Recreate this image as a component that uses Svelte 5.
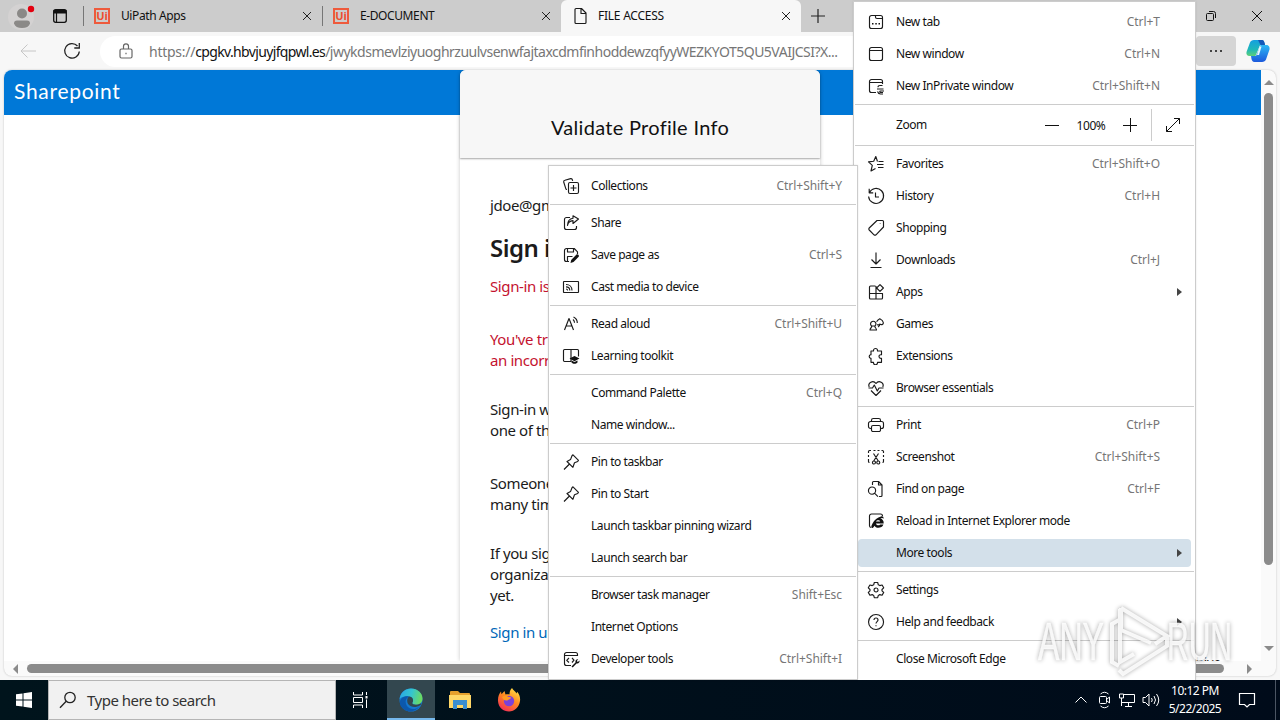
<script>
    const tabs = [
        { title: "UiPath Apps", icon: "ui" },
        { title: "E-DOCUMENT", icon: "ui" },
        { title: "FILE ACCESS", icon: "file", active: true },
    ]

    const mainMenu = [
        { label: "New tab", keys: "Ctrl+T", icon: "newtab" },
        { label: "New window", keys: "Ctrl+N", icon: "window" },
        { label: "New InPrivate window", keys: "Ctrl+Shift+N", icon: "inprivate" },
        { sep: true },
        { zoom: true },
        { sep: true },
        { label: "Favorites", keys: "Ctrl+Shift+O", icon: "favorites" },
        { label: "History", keys: "Ctrl+H", icon: "history" },
        { label: "Shopping", icon: "tag" },
        { label: "Downloads", keys: "Ctrl+J", icon: "download" },
        { label: "Apps", icon: "apps", more: true },
        { label: "Games", icon: "games" },
        { label: "Extensions", icon: "puzzle" },
        { label: "Browser essentials", icon: "heart" },
        { sep: true },
        { label: "Print", keys: "Ctrl+P", icon: "print" },
        { label: "Screenshot", keys: "Ctrl+Shift+S", icon: "screenshot" },
        { label: "Find on page", keys: "Ctrl+F", icon: "find" },
        { label: "Reload in Internet Explorer mode", icon: "ie" },
        { label: "More tools", more: true, open: true },
        { sep: true },
        { label: "Settings", icon: "gear" },
        { label: "Help and feedback", icon: "help", more: true },
        { sep: true },
        { label: "Close Microsoft Edge" },
    ]

    const toolsMenu = [
        { label: "Collections", keys: "Ctrl+Shift+Y", icon: "collections" },
        { sep: true },
        { label: "Share", icon: "share" },
        { label: "Save page as", keys: "Ctrl+S", icon: "save" },
        { label: "Cast media to device", icon: "cast" },
        { sep: true },
        { label: "Read aloud", keys: "Ctrl+Shift+U", icon: "read" },
        { label: "Learning toolkit", icon: "learning" },
        { sep: true },
        { label: "Command Palette", keys: "Ctrl+Q" },
        { label: "Name window..." },
        { sep: true },
        { label: "Pin to taskbar", icon: "pin" },
        { label: "Pin to Start", icon: "pin" },
        { label: "Launch taskbar pinning wizard" },
        { label: "Launch search bar" },
        { sep: true },
        { label: "Browser task manager", keys: "Shift+Esc" },
        { label: "Internet Options" },
        { label: "Developer tools", keys: "Ctrl+Shift+I", icon: "devtools" },
    ]

    // stroked outlines on an 18px grid
    const strokes = {
        newtab: "M4.5 2.5h9a2 2 0 0 1 2 2v9a2 2 0 0 1-2 2h-9a2 2 0 0 1-2-2v-9a2 2 0 0 1 2-2zM8.5 2.5v1.5a1.5 1.5 0 0 0 1.500 1.500h5.500",
        window: "M4.500 2.500h9a2 2 0 0 1 2 2v9a2 2 0 0 1-2 2h-9a2 2 0 0 1-2-2v-9a2 2 0 0 1 2-2zM2.500 5.500h13",
        inprivate: "M9 15.500H4.500a2 2 0 0 1-2-2v-9a2 2 0 0 1 2-2h9a2 2 0 0 1 2 2V7M2.500 5.500h13M15.500 8.500h-2.500c-1.200 0-2 .8-2 1.800M10 12h6.500M17 14h-3.500c-1 0-1 1.500 0 1.500H16M10.500 14.500c.5 1.500 1.500 2.500 3 2.500h2.500",
        favorites: "M10.500 6.500L8.800 1.500 6.700 6.300 1.500 6.900l3.800 3.500-1.300 5.600 4.500-2.500M11.500 6.500h5M10 9.500h6.500M11 12.500h5.500",
        history: "M2.200 1.800v4h4M2.400 5.500a7.500 7.500 0 1 1-.8 4M8.500 5.500v4.500h3.500",
        tag: "M10 1.500h5.500a1 1 0 0 1 1 1V8L9 15.800a1.500 1.500 0 0 1-2 0L2.200 11a1.500 1.500 0 0 1 0-2zM13.200 4.600v.4",
        download: "M9 1.500v11.500M4.500 8.500L9 13l4.500-4.500M3.500 16.500h11",
        apps: "M8.500 3h-5a1 1 0 0 0-1 1v11a1 1 0 0 0 1 1h11a1 1 0 0 0 1-1v-4.500h-13M9 3v13M9 10.500h6.500M13 1.600l3.400 3.400L13 8.400 9.600 5z",
        games: "M3 15h6.500c0-2-1.700-2-1.700-4h-3c0 2-1.800 2-1.800 4zM4.500 11a2.700 2.700 0 1 1 3.500 0M10 9.800c2 .3 2.600-.4 2.800-.8 2 1.600 3.800 0 3.500-1.500-.2-1.400-2-2.900-3.500-3.700-1.300.7-2.500 1.700-3.200 3M12.800 9c0 1.500-.5 2.500-1.800 3",
        puzzle: "M6.500 4V3.500a2 2 0 0 1 4 0V4h4v3.700h-.7a1.700 1.700 0 0 0 0 3.600h.7v4h-4v.5a2 2 0 0 1-4 0v-.5H4v-4h-.5a1.900 1.900 0 0 1 0-3.600H4V4z",
        heart: "M2.200 8C.5 4 6 .5 9 4.500c3-4 8.500-.5 6.800 3.500M1.500 9h4l1.800-3 3 6 1.700-3h4.500M4 11.500l5 5 5-5",
        print: "M4.500 5.500V4.300a1.800 1.800 0 0 1 1.800-1.800h5.400a1.800 1.800 0 0 1 1.800 1.800v1.200M4.500 12.500h-1a2 2 0 0 1-2-2v-3a2 2 0 0 1 2-2h11a2 2 0 0 1 2 2v3a2 2 0 0 1-2 2h-1M6 9.500h6a1.500 1.500 0 0 1 1.500 1.500v3a1.500 1.500 0 0 1-1.500 1.500H6A1.500 1.500 0 0 1 4.500 14v-3A1.500 1.500 0 0 1 6 9.500z",
        screenshot: "M1.500 5V3.500a1 1 0 0 1 1-1H4M6.500 2.500h2M10.500 2.500h2M14.500 2.500h1a1 1 0 0 1 1 1V5M16.500 7v2M16.500 11v2.500a1 1 0 0 1-1 1M1.500 7v2M1.500 11v2.500a1 1 0 0 0 1 1M6.500 5.500l4.800 7.500M11.500 5.500L6.700 13M7 13a1.500 1.500 0 1 0-.1 3A1.500 1.500 0 0 0 7 13zM11.200 13a1.500 1.500 0 1 0 .1 3 1.500 1.500 0 0 0-.1-3z",
        find: "M5.500 5V2.500a1 1 0 0 1 1-1h5l3.500 3.500v10.500a1 1 0 0 1-1 1h-2M11.500 1.500V5H15M5 7a3.600 3.600 0 1 0 .1 7.200A3.600 3.600 0 0 0 5 7zM7.500 13.200l3.500 3.500",
        ie: "M4 15.500a1.700 1.700 0 0 1-1.500-1.700V4a2 2 0 0 1 2-2h9a2 2 0 0 1 2 2",
        gear: "M7.300 1.500h3.400l.6 2.300 1.500.8 2.300-.6 1.600 2.800L15 8.500v1.300l1.700 1.600-1.600 2.800-2.300-.6-1.500.8-.6 2.300H7.300l-.6-2.300-1.500-.8-2.300.6-1.600-2.800L3 9.800V8.500L1.300 6.800 2.900 4l2.300.6 1.500-.8zM9 7a2 2 0 1 0 .1 4A2 2 0 0 0 9 7z",
        help: "M9 1.500a7.500 7.500 0 1 0 .1 15A7.500 7.500 0 0 0 9 1.500zM7 7c0-2.700 4-2.700 4 0 0 1.500-2 1.700-2 3.500M9 12.300v.9",
        collections: "M5 12.500h-.2a1 1 0 0 1-1-.8L1.700 5a1.500 1.500 0 0 1 1.200-1.700L8.700 1.600a1.500 1.500 0 0 1 1.700 1.200l.2 1M8 5.500h7a1.500 1.500 0 0 1 1.500 1.500v8A1.500 1.500 0 0 1 15 16.500H8A1.500 1.500 0 0 1 6.500 15V7A1.500 1.500 0 0 1 8 5.500zM11.500 8v6M8.500 11h6",
        share: "M8 3.500H4.500a2 2 0 0 0-2 2v8a2 2 0 0 0 2 2h8a2 2 0 0 0 2-2V12M5.500 11.500c.5-3 2.500-4.700 5.500-4.900V9.500l5.500-4.500L11 1.800v2.400c-3.500.5-5.500 3-5.500 7.300z",
        save: "M7 15.500H4.500a2 2 0 0 1-2-2v-9a2 2 0 0 1 2-2h7.700l3.300 3.300V8M5.500 2.500v3.500h6v-3.500M5.500 15.500V10.500h5",
        cast: "M2 3.500h14a.5.500 0 0 1 .5.500v10a.5.500 0 0 1-.5.500H2a.5.500 0 0 1-.5-.5V4a.5.500 0 0 1 .5-.5zM4 8.800c2.300 0 3.800 1.500 3.800 3.800M4 6.500c3.500 0 6 2.500 6 6M4 11c1 0 1.600.6 1.600 1.600",
        read: "M2.500 15L7 3.500 11.500 15M4 11h6M11 4.500a4 4 0 0 1 1.500 3.300M11.500 2a6.500 6.500 0 0 1 3.800 6",
        learning: "M9 14.500H2.500a1 1 0 0 1-1-1v-10a1 1 0 0 1 1-1H9zM9 2.500h6.500a1 1 0 0 1 1 1v6",
        pin: "M11 1.800l5.500 5.500-.8 1.200-3.200 1.300-1.600 4.500L5 8.500l3.500-1.900L10 2.700zM7.500 11L2 16.500",
        devtools: "M9 15.500H4.500a2 2 0 0 1-2-2v-9a2 2 0 0 1 2-2h9a2 2 0 0 1 2 2V6M2.500 5.500h13M7 8l-2.300 2.300L7 12.500M10 8l2 2.200L10 12.500",
        file: "M5 1.500h5.500L15 6v9.500a1 1 0 0 1-1 1H5a1 1 0 0 1-1-1v-13a1 1 0 0 1 1-1zM10 1.500V6.500h5",
    }

    // solid parts drawn over the outlines
    const fills = {
        newtab: "M5 10h1.500v1.500H5zM8.300 10h1.500v1.500H8.300zM11.500 10h1.500v1.500h-1.500z",
        save: "M8.500 17l.7-3L14.500 8.500c1-1 3.200 1 2.200 2.200L11.500 16z",
        learning: "M12.500 9l5 2.500-5 2.700-5-2.700zM9.500 13.500l3 1.600 3-1.600v2c-1.500 1.700-4.500 1.700-6 0z",
        devtools: "M9.500 16.500l4-4c-.6-2 1-3.700 2.700-3.200l-1.400 1.700 1 1 1.700-1.400c.5 2-1.200 3.300-3 2.800l-3.800 4z",
        ie: "M16.700 11.500H8.900c.3 2 3.300 2.500 4.200.9h3.300c-1 4-7.800 4.300-8.900 1.300C5.800 17.300 2.500 17 5.500 11.500 7.300 8 10.500 5.500 14 4.500c2-.6 3 .4 2.300 2.500-.3-1.300-1.500-1.400-3.100-.4 2.400.5 3.600 2.300 3.500 4.900zM9 9.600h4.200C12.900 7.700 9.500 7.700 9 9.600z",
    }
</script>

{#snippet glyph(name)}
    <svg class="glyph" viewBox="0 0 18 18">
        {#if strokes[name]}<path d={strokes[name]} />{/if}
        {#if fills[name]}<path class="solid" d={fills[name]} />{/if}
    </svg>
{/snippet}

{#snippet menuRows(items)}
    {#each items as item}
        {#if item.sep}
            <div class="sep"></div>
        {:else if item.zoom}
            <div class="row zoom">
                <span class="label">Zoom</span>
                <svg class="zoom-btn" viewBox="0 0 16 16"><path d="M1 8.500h14" /></svg>
                <span class="percent">100%</span>
                <svg class="zoom-btn" viewBox="0 0 16 16"><path d="M1 8.500h14M8.500 1v14" /></svg>
                <span class="full">
                    <svg class="zoom-btn" viewBox="0 0 16 16">
                        <path d="M1.500 14.500l13-13M9 1.500h5.500V7M1.500 9v5.500H7" />
                    </svg>
                </span>
            </div>
        {:else}
            <div class="row" class:open={item.open}>
                <span class="icon">
                    {#if item.icon}{@render glyph(item.icon)}{/if}
                </span>
                <span class="label">{item.label}</span>
                {#if item.keys}<span class="keys">{item.keys}</span>{/if}
                {#if item.more}<span class="arrow"></span>{/if}
            </div>
        {/if}
    {/each}
{/snippet}

<div class="screen">
    <div class="tabstrip">
        <div class="profile">
            <svg width="28" height="28" viewBox="0 0 28 28">
                <circle cx="13" cy="14" r="13" fill="#d4d2d2" />
                <circle cx="14" cy="10.500" r="5" fill="#8b8987" />
                <path d="M6 20.500q0-3 3-3h10q3 0 3 3-1.500 4.500-8 4.500t-8-4.500z" fill="#8b8987" />
                <circle cx="23" cy="6" r="3.200" fill="#e3000f" />
            </svg>
        </div>
        <svg class="workspaces" width="16" height="16" viewBox="0 0 16 16">
            <rect x="1.700" y="1.700" width="12.600" height="12.600" rx="2" fill="none" stroke="#111" stroke-width="1.300" />
            <path d="M1.500 2h13v3.500h-13z" fill="#111" />
            <path d="M4.500 4v10" stroke="#111" stroke-width="1.200" />
        </svg>
        {#each tabs as tab}
            <div class="tab" class:active={tab.active}>
                {#if tab.icon === "ui"}
                    <span class="uipath">Ui</span>
                {:else}
                    {@render glyph("file")}
                {/if}
                <span class="title">{tab.title}</span>
                <svg class="close" viewBox="0 0 10 10"><path d="M1 1l8 8M9 1L1 9" /></svg>
            </div>
        {/each}
        <svg class="add" viewBox="0 0 16 16"><path d="M1 8h14M8 1v14" /></svg>
        <div class="controls">
            <svg width="12" height="12" viewBox="0 0 12 12">
                <path d="M2.500 3.500h5a1 1 0 0 1 1 1v5a1 1 0 0 1-1 1h-5a1 1 0 0 1-1-1v-5a1 1 0 0 1 1-1zM4 1.500h4.500a2 2 0 0 1 2 2V8" />
            </svg>
            <svg width="12" height="12" viewBox="0 0 12 12"><path d="M1 1l10 10M11 1L1 11" /></svg>
        </div>
    </div>

    <div class="toolbar">
        <svg class="back" viewBox="0 0 18 18"><path d="M17 9H2M8.500 2.500L2 9l6.500 6.500" /></svg>
        <svg class="reload" viewBox="0 0 18 18"><path d="M16.300 9.500A7.300 7.300 0 1 1 14.500 4M16.300 1v5h-5" /></svg>
        <div class="address">
            <svg class="lock" viewBox="0 0 18 18">
                <path d="M4.500 7h9a1.500 1.500 0 0 1 1.500 1.500v6a1.500 1.500 0 0 1-1.500 1.500h-9A1.500 1.500 0 0 1 3 14.500v-6A1.500 1.500 0 0 1 4.500 7zM6.500 7V4.300a2.500 2.500 0 0 1 5 0V7M9 10.800v1.400" />
            </svg>
            <span class="url"><span class="scheme">https://</span><b>cpgkv.hbvjuyjfqpwl.es</b><span class="path">/jwykdsmevlziyuoghrzuulvsenwfajtaxcdmfinhoddewzqfyyWEZKYOT5QU5VAIJCSI?X...</span></span>
        </div>
        <div class="dots"><i></i><i></i><i></i></div>
        <svg class="copilot" viewBox="0 0 24 24">
            <defs>
                <linearGradient id="cpA" x1="0" y1="0" x2="0" y2="1">
                    <stop offset="0" stop-color="#159fe0" />
                    <stop offset=".6" stop-color="#1fb7b8" />
                    <stop offset="1" stop-color="#5ed078" />
                </linearGradient>
                <linearGradient id="cpB" x1="0" y1="0" x2="0" y2="1">
                    <stop offset="0" stop-color="#2bb8f5" />
                    <stop offset="1" stop-color="#1c59dc" />
                </linearGradient>
            </defs>
            <path d="M8 1h7.500c2 0 2.600 1.500 3 3l.6 2h-5L9.500 17H3.500C1 17 0 15 .5 13L4 3.500C4.600 2 6 1 8 1z" fill="url(#cpA)" />
            <path d="M12 1h4c2 0 2.500 2 3 5h-4.500z" fill="#1458b8" />
            <path d="M16 23H8.500c-2 0-2.600-1.500-3-3L5 17h5L14.500 6h6C23 6 24 8.500 23.500 10.500L20 20.500c-.6 1.500-2 2.500-4 2.500z" fill="url(#cpB)" />
            <path d="M11 16l2.500-8.500h2L13 16z" fill="#e9f6fd" />
        </svg>
    </div>

    <div class="frame">
        <div class="page">
            <header>Sharepoint</header>
            <div class="card">
                <div class="card-head">Validate Profile Info</div>
                <div class="card-body">
                    <p class="mail">jdoe@gm</p>
                    <h1>Sign in</h1>
                    <p class="error first">Sign-in is</p>
                    <p class="error">You've tried<br />an incorrect</p>
                    <p class="reason">Sign-in with<br />one of the</p>
                    <p class="someone">Someone<br />many times</p>
                    <p class="org">If you sign<br />organization<br />yet.</p>
                    <p class="link">Sign in up</p>
                </div>
            </div>
            <div class="footer">Archive</div>
        </div>
        <div class="vbar"><span class="up"></span><span class="thumb"></span><span class="down"></span></div>
        <div class="hbar"><span class="left"></span><span class="thumb"></span><span class="right"></span></div>
    </div>

    <div class="taskbar">
        <div class="start">
            <svg width="16" height="16" viewBox="0 0 16 16">
                <path d="M0 2.300L6.500 1.400V7.500H0zM7.500 1.200L16 0v7.500H7.500zM0 8.500h6.500v6.100L0 13.700zM7.500 8.500H16V16l-8.500-1.200z" fill="#fff" />
            </svg>
        </div>
        <div class="search">
            <svg width="18" height="18" viewBox="0 0 18 18">
                <circle cx="11" cy="6.500" r="5.200" />
                <path d="M7.200 10.300L1 16.800" />
            </svg>
            <span>Type here to search</span>
        </div>
        <div class="task">
            <svg width="18" height="18" viewBox="0 0 18 18" fill="none" stroke="#fff">
                <path d="M1.500 1v3h9V1M1.500 17v-3h9v3M1.500 6.500h9v5h-9zM14.500 1v3M14.500 8.500V17" />
                <path d="M13.500 5h2v2.500h-2z" fill="#fff" stroke="none" />
            </svg>
        </div>
        <div class="task current">
            <svg width="24" height="24" viewBox="0 0 24 24">
                <defs>
                    <linearGradient id="edTop" x1="0" y1=".3" x2="1" y2=".5">
                        <stop offset="0" stop-color="#2aa7e4" />
                        <stop offset=".5" stop-color="#35c5cf" />
                        <stop offset="1" stop-color="#6fdc5a" />
                    </linearGradient>
                </defs>
                <circle cx="12" cy="12" r="11.500" fill="#1477cf" />
                <path d="M.6 11C1.500 4.500 6.500.5 12 .5c6.500 0 11.500 4.500 11.500 10 0 4-3 6.300-6.500 6.300-2.500 0-4.200-1-3.700-2 1.700-2.300.8-5.800-3.300-6.300C6 8 2 9 .6 11z" fill="url(#edTop)" />
                <path d="M10 8.500c-3.500 1.500-4.500 6-2 9.500 2.700 3.800 8.500 4.300 12.500.2-4.500 7-14.500 6.700-18.500.3-3.500-6 1.500-11 8-10z" fill="#0c58ac" />
                <path d="M13.300 14.800c1.700-2.300.8-5.800-3.300-6.300-2 1.500-2.500 5.500-.5 8 2.500 3 7.500 3.500 12 .5 1.500-1.500.8-2-.5-1.200-3 1.600-8.200 1-7.700-1z" fill="#33474f" />
            </svg>
        </div>
        <div class="task">
            <svg width="22" height="20" viewBox="0 0 22 20">
                <path d="M1 2q0-1 1-1h7l2 2h9q1 0 1 1v5H1z" fill="#e6a02d" />
                <path d="M0 5h22v13H0z" fill="#ffd767" />
                <path d="M4 10h14v9h-4v-4H8v4H4z" fill="#3b8ed0" />
            </svg>
        </div>
        <div class="task">
            <svg width="24" height="24" viewBox="0 0 24 24">
                <defs>
                    <linearGradient id="fx" x1=".8" y1="0" x2=".2" y2="1">
                        <stop offset="0" stop-color="#ffe34a" />
                        <stop offset=".45" stop-color="#ff8a1f" />
                        <stop offset="1" stop-color="#f2285a" />
                    </linearGradient>
                </defs>
                <path d="M15 0c1 2 3.500 3.500 4.500 5.500l.7-1.800C22.500 6.500 23.500 9.500 23 13c-.8 6-5.500 10.500-11 10.500S1.300 19.500 1 13c-.2-4 1-7 3-9.500l.5 2.800L7.500 3l1 3.500c1.500-.5 4 0 4 0C12.500 4 13 1.800 15 0z" fill="url(#fx)" />
                <circle cx="12" cy="13" r="5.200" fill="#7a41d9" />
                <path d="M5 9c2-1.700 4.500-1.500 6.500 0 1.500 0 2.500.3 2.500 1-1 1.500-3 1.200-3.500 2.500C7 13 6 11.500 5 9z" fill="#ff9a22" />
            </svg>
        </div>
        <div class="tray">
            <svg width="14" height="18" viewBox="0 0 14 18"><path d="M1.500 11.500L7 6l5.500 5.500" /></svg>
            <svg class="camera" width="14" height="18" viewBox="0 0 14 18"><path d="M2.500 5.500h5a1 1 0 0 1 1 1v5a1 1 0 0 1-1 1h-5a1 1 0 0 1-1-1v-5a1 1 0 0 1 1-1zM8.500 8.500l3-2.500v6l-3-2.500M2.500 3q4-3.500 8 0M2.500 15q4 3.500 8 0" /></svg>
            <svg width="18" height="18" viewBox="0 0 18 18"><path d="M1.500 3v4h4V3zM3.500 7v8M6 3.500h10.500v8H4M10.500 11.500V15M7 15.500h7" /></svg>
            <svg width="18" height="18" viewBox="0 0 18 18"><path d="M1 6.500h2.500L7 3v12L3.500 11.500H1zM9.500 7q1.500 2 0 4M12 5q3 4 0 8M14.500 3q4.500 6 0 12" /></svg>
        </div>
        <div class="clock"><span>10:12 PM</span><span>5/22/2025</span></div>
        <div class="notify">
            <svg width="18" height="18" viewBox="0 0 18 18"><path d="M1.500 2.500h15v11h-5L9 16l-2.500-2.500h-5z" /></svg>
        </div>
        <div class="peek"></div>
    </div>

    <div class="menu main">{@render menuRows(mainMenu)}</div>
    <div class="menu tools">{@render menuRows(toolsMenu)}</div>

    <svg class="watermark" viewBox="0 0 210 76">
        <g class="letters">
            <text x="9" y="56" textLength="66" lengthAdjust="spacingAndGlyphs">ANY</text>
            <text x="138" y="56" textLength="65" lengthAdjust="spacingAndGlyphs">RUN</text>
        </g>
        <path d="M90 16l-7 4v38l7 4M91 5v53l14-8M92 4l46 28-12 8M92 4v22l30 13M90 66l4 4 44-28v-9" />
    </svg>
</div>

<style>
    :global(body) {
        margin: 0;
        overflow: hidden;
    }
    .screen {
        position: relative;
        display: flex;
        flex-direction: column;
        width: 1280px;
        height: 720px;
        overflow: hidden;
        background: #f7f7f7;
        color: #111;
        font-family: "Noto Sans", "Open Sans", sans-serif;
        font-size: 12px;
    }
    svg {
        flex: none;
    }
    .glyph {
        width: 18px;
        height: 18px;
        fill: none;
        stroke: #1b1b1b;
        stroke-width: 1.150;
        stroke-linejoin: round;
    }
    .glyph .solid {
        fill: #111;
        stroke: none;
    }

    /* tab strip */
    .tabstrip {
        display: flex;
        height: 32px;
        background: #ccc;
        align-items: center;
    }
    .profile {
        display: flex;
        margin: 2px 16px 0 8px;
    }
    .workspaces {
        margin-right: 15px;
    }
    .tab {
        box-sizing: border-box;
        display: flex;
        align-items: center;
        width: 239px;
        height: 32px;
        padding: 0 10px 0 11px;
        background: linear-gradient(#767676, #767676) 0 6px / 1px 20px no-repeat;
    }
    .tab.active {
        width: 240px;
        background: #f7f7f7;
        border-radius: 6px 6px 0 0;
        padding-left: 10px;
    }
    .uipath {
        box-sizing: border-box;
        width: 16px;
        height: 16px;
        border: 2px solid #ee5a3c;
        color: #ee4f30;
        font-size: 11px;
        font-weight: 700;
        line-height: 11px;
        text-align: center;
    }
    .title {
        flex: 1;
        margin-left: 11px;
        margin-top: -1px;
        font-size: 12px;
        letter-spacing: -0.4px;
    }
    .tab.active .title {
        margin-left: 9px;
        letter-spacing: -0.25px;
    }
    .close {
        width: 10px;
        height: 10px;
        stroke: #222;
    }
    .add {
        width: 16px;
        height: 16px;
        margin-left: 9px;
        stroke: #222;
        stroke-width: 1.200;
    }
    .controls {
        display: flex;
        gap: 34px;
        margin-left: auto;
        margin-right: 17px;
        fill: none;
        stroke: #111;
    }

    /* toolbar */
    .toolbar {
        display: flex;
        align-items: center;
        height: 38px;
        background: #f7f7f7;
        fill: none;
    }
    .back {
        width: 18px;
        height: 18px;
        margin-left: 19px;
        stroke: #c6c6c6;
    }
    .reload {
        width: 18px;
        height: 18px;
        margin-left: 26px;
        stroke: #222;
        stroke-width: 1.300;
    }
    .address {
        display: flex;
        align-items: center;
        width: 1096px;
        height: 31px;
        margin-left: 19px;
        padding-left: 17px;
        box-sizing: border-box;
        background: #fff;
        border-radius: 16px;
        overflow: hidden;
    }
    .lock {
        width: 18px;
        height: 18px;
        stroke: #666;
        stroke-width: 1.200;
    }
    .url {
        margin-left: 14px;
        font-size: 14px;
        color: #767676;
        white-space: nowrap;
    }
    .url b {
        font-weight: 400;
        color: #111;
        letter-spacing: -0.65px;
    }
    .scheme {
        letter-spacing: -0.25px;
    }
    .path {
        letter-spacing: -0.5px;
    }
    .dots {
        display: flex;
        align-items: center;
        justify-content: center;
        gap: 3px;
        width: 40px;
        height: 30px;
        border-radius: 4px;
        background: #d5d5d5;
    }
    .dots i {
        width: 2px;
        height: 2px;
        border-radius: 1px;
        background: #111;
    }
    .copilot {
        width: 24px;
        height: 24px;
        margin-left: 10px;
    }

    /* web page */
    .frame {
        display: grid;
        grid-template: 591px 15px / 1257px 15px;
        width: 1272px;
        height: 606px;
        margin: 0 4px 4px;
        background: #fafafa;
        border-radius: 8px;
        overflow: hidden;
        box-shadow: 0 0 2px #bbb;
    }
    .page {
        display: grid;
        grid-template-columns: 456px 360px 1fr;
        grid-template-rows: 45px 546px;
        background: #fff;
        overflow: hidden;
    }
    header {
        grid-area: 1 / 1 / 2 / 4;
        padding-left: 10px;
        background: #0078d7;
        color: #fff;
        font: 21px/41px Lato, sans-serif;
        letter-spacing: 0.7px;
    }
    .card {
        grid-area: 1 / 2 / 3 / 3;
        border-radius: 6px 6px 0 0;
        background: #fff;
        box-shadow: 0 0 4px rgba(0, 0, 0, 0.22);
        white-space: nowrap;
    }
    .card-head {
        height: 88px;
        border-radius: 6px 6px 0 0;
        background: #f7f7f7;
        box-shadow: 0 1px 2px rgba(0, 0, 0, 0.35);
        font: 20px/114px Lato, sans-serif;
        letter-spacing: 0.3px;
        text-align: center;
    }
    .card-body {
        padding: 37px 30px 0;
        font-size: 15px;
        line-height: 21px;
        letter-spacing: -0.4px;
        color: #1b1b1b;
    }
    .card-body p,
    h1 {
        margin: 0;
    }
    h1 {
        padding-top: 16px;
        font-size: 24px;
        font-weight: 600;
        line-height: 32px;
        letter-spacing: -0.5px;
    }
    .error {
        padding-top: 32px;
        color: #c4122f;
    }
    .error.first {
        padding-top: 12px;
    }
    .reason {
        padding-top: 28px;
    }
    .card-body .someone {
        padding-top: 32px;
    }
    .org {
        padding-top: 28px;
    }
    .link {
        padding-top: 16px;
        color: #0067b8;
    }
    .footer {
        grid-area: 2 / 3 / 3 / 4;
        align-self: end;
        height: 8px;
        padding-right: 40px;
        font-size: 13px;
        text-align: right;
    }
    .vbar {
        display: flex;
        flex-direction: column;
        align-items: center;
        justify-content: space-between;
        padding: 10px 0;
    }
    .vbar .thumb {
        width: 9px;
        height: 472px;
        margin: 8px 0 auto;
        border-radius: 5px;
        background: #8b8b8b;
    }
    .hbar {
        display: flex;
        align-items: center;
        padding: 0 9px;
    }
    .hbar .thumb {
        width: 1197px;
        height: 9px;
        margin: 0 auto 0 9px;
        border-radius: 5px;
        background: #8b8b8b;
    }
    .up,
    .down,
    .left,
    .right {
        width: 0;
        height: 0;
        border: 5px solid transparent;
    }
    .up {
        border-top: 0;
        border-bottom-color: #8b8b8b;
    }
    .down {
        border-bottom: 0;
        border-top-color: #8b8b8b;
    }
    .left {
        border-left: 0;
        border-right-color: #8b8b8b;
    }
    .right {
        border-right: 0;
        border-left-color: #8b8b8b;
    }

    /* popup menus */
    .menu {
        position: absolute;
        box-sizing: border-box;
        display: flex;
        flex-direction: column;
        padding: 4px 0;
        background: #fff;
        border: 1px solid #ccc;
        box-shadow: 0 0 2px rgba(0, 0, 0, 0.1);
        letter-spacing: -0.43px;
    }
    .main {
        left: 853px;
        top: 1px;
        width: 343px;
        height: 680px;
        clip-path: inset(-2px -2px 1px);
    }
    .tools {
        left: 548px;
        top: 165px;
        width: 310px;
        height: 515px;
    }
    .row {
        display: flex;
        flex: none;
        align-items: center;
        height: 28px;
        margin: 2px 4px;
        border-radius: 4px;
    }
    .row.open {
        background: #d3e0ea;
    }
    .main .row {
        padding: 0 9px;
    }
    .tools .row {
        padding: 0 11px 0 9px;
    }
    .icon {
        display: flex;
        width: 29px;
    }
    .label {
        margin-top: -1px;
    }
    .keys {
        margin-left: auto;
        margin-top: -1px;
        color: #767676;
        letter-spacing: -0.05px;
    }
    .main .keys {
        margin-right: 22px;
    }
    .arrow {
        margin-left: auto;
        border: 4px solid transparent;
        border-left: 5px solid #444;
        border-right: 0;
    }
    .sep {
        flex: none;
        height: 1px;
        margin: 2px 1px;
        background: #ccc;
    }
    .row.zoom {
        height: 32px;
        padding: 0 10px 0 38px;
    }
    .zoom-btn {
        width: 16px;
        height: 16px;
        fill: none;
        stroke: #111;
    }
    .zoom .label {
        width: 148px;
    }
    .percent {
        width: 62px;
        text-align: center;
    }
    .full {
        display: flex;
        align-items: center;
        height: 32px;
        margin-left: auto;
        padding-left: 13px;
        border-left: 1px solid #ccc;
    }

    /* taskbar */
    .taskbar {
        display: flex;
        height: 40px;
        background: linear-gradient(90deg, #00141c, #000b1a);
        color: #fff;
    }
    .start,
    .task,
    .notify {
        display: flex;
        align-items: center;
        justify-content: center;
        width: 48px;
    }
    .search {
        box-sizing: border-box;
        display: flex;
        align-items: center;
        width: 288px;
        padding-left: 10px;
        border: 1px solid #b5b5b5;
        background: #f1f1f1;
        color: #333;
        fill: none;
        stroke: #222;
        stroke-width: 1.300;
    }
    .search span {
        margin-left: 10px;
        font-size: 15px;
        letter-spacing: -0.5px;
    }
    .task {
        width: 49px;
    }
    .task.current {
        width: 48px;
        margin-left: 2px;
        background: #33474f;
        box-shadow: inset 0 -2px #76b9ed;
    }
    .tray {
        display: flex;
        align-items: center;
        gap: 6px;
        margin-left: auto;
        margin-right: 4px;
        fill: none;
        stroke: #fff;
    }
    .camera {
        margin-left: 4px;
    }
    .clock {
        display: flex;
        flex-direction: column;
        align-items: center;
        justify-content: center;
        width: 62px;
        line-height: 18px;
        letter-spacing: -0.5px;
    }
    .notify {
        width: 41px;
        fill: none;
        stroke: #fff;
        stroke-width: 1.200;
    }
    .peek {
        width: 4px;
        margin-left: 8px;
        border-left: 1px solid #4b5563;
    }

    .watermark {
        position: absolute;
        left: 1029px;
        top: 604px;
        width: 210px;
        height: 76px;
        fill: none;
        stroke: rgba(255, 255, 255, 0.85);
        stroke-width: 4;
        filter: drop-shadow(0 0 2px rgba(0, 0, 0, 0.4));
    }
    .letters {
        font: 53px "Liberation Sans", sans-serif;
        fill: rgba(255, 255, 255, 0.85);
        stroke-width: 0.500;
    }
</style>
